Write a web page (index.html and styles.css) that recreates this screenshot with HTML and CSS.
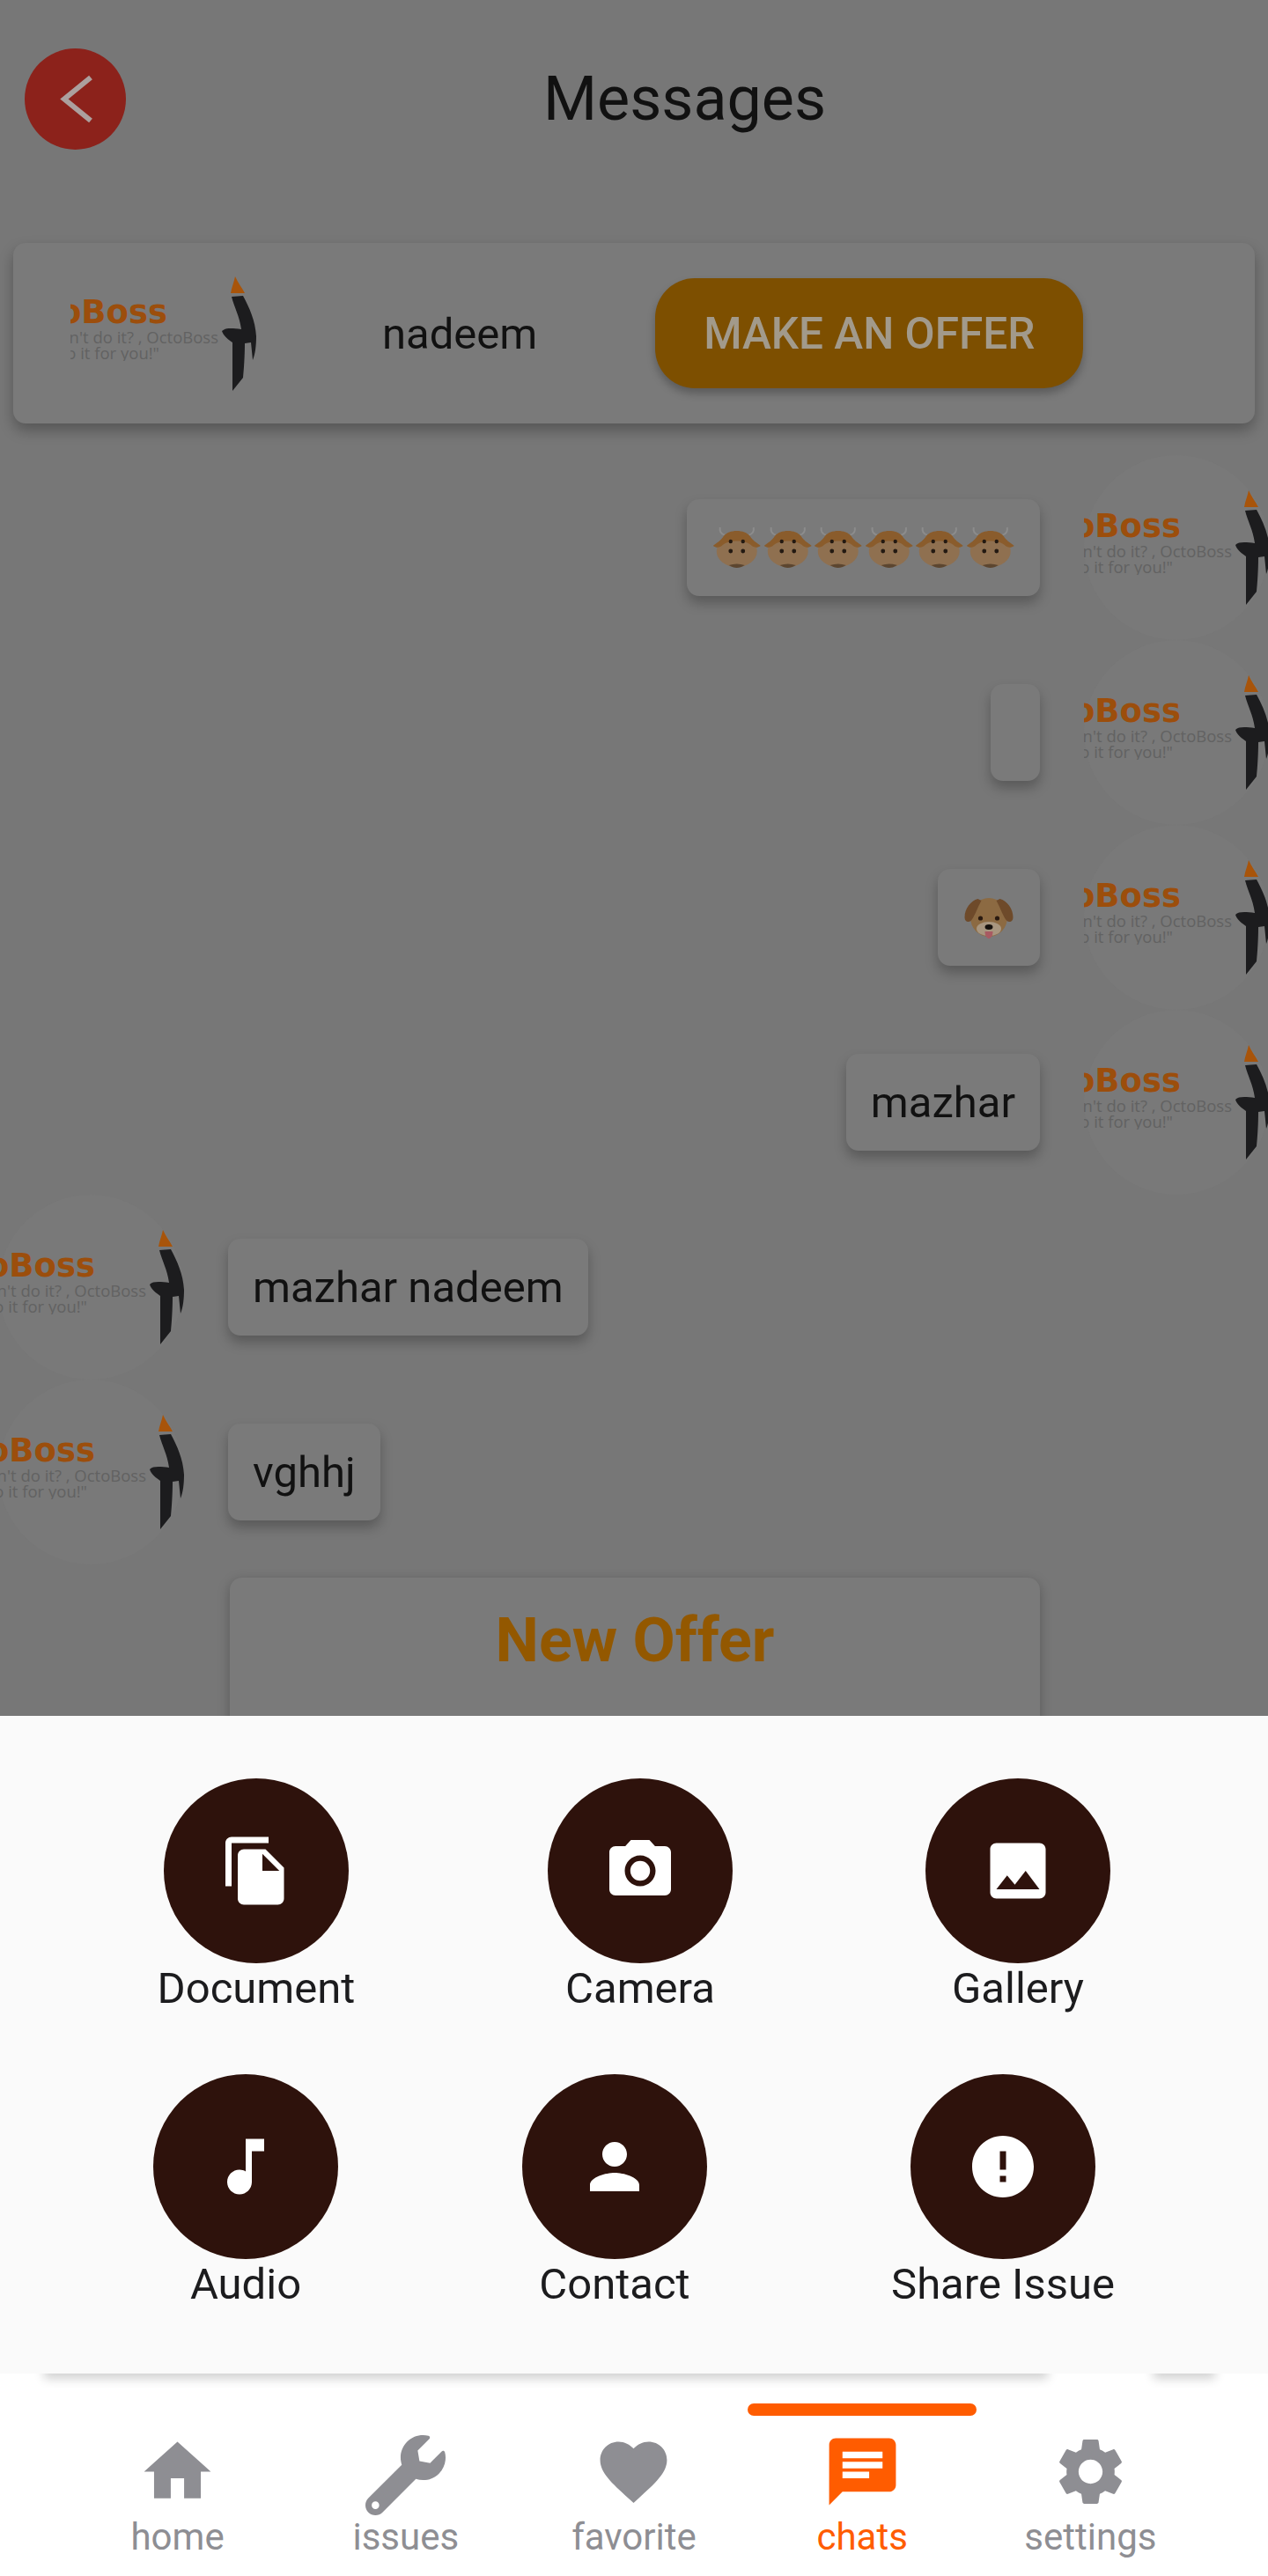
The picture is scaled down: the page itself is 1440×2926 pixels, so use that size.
FILE: index.html
```html
<!DOCTYPE html>
<html lang="en">
<head>
<title>Messages</title>
<meta charset="utf-8">
<link rel="stylesheet" href="styles.css">
</head>
<body>
<svg class="defs">
  <symbol id="rocket" viewBox="0 0 40 130">
    <path fill="#a8540a" d="M15 0C18 7 23 13 26 19L10 19C11 12 14 6 15 0Z"/>
    <path fill="#1c1c1e" d="M11 23L24 22C31 35 38 50 39 68C39 78 38 88 35 95L33 75L26 76C26 90 25 105 24 115L12 130L12 75C8 72 2 68 0 62C4 58 12 59 22 60C20 45 14 35 11 23Z"/>
  </symbol>
  <symbol id="cow" viewBox="0 0 54 48">
    <path fill="none" stroke="#8c8c8c" stroke-width="2" d="M8 1C7 6 10 9 14 10M46 1C47 6 44 9 40 10"/>
    <ellipse cx="27" cy="28" rx="23" ry="18" fill="#8f7050"/>
    <path fill="#8a5c2c" d="M0 22C5 18 9 16 12 11C18 3 36 3 42 11C45 16 49 18 54 22C50 25 46 24 43 21C36 15 18 15 11 21C8 24 4 25 0 22Z"/>
    <path fill="#5c4630" d="M18 44C24 48 30 48 36 44C30 42 24 42 18 44Z"/>
    <circle cx="20" cy="17" r="2.200" fill="#241a12"/>
    <circle cx="34" cy="17" r="2.200" fill="#241a12"/>
    <circle cx="20" cy="28" r="2.400" fill="#241a12"/>
    <circle cx="34" cy="28" r="2.400" fill="#241a12"/>
  </symbol>
  <symbol id="dog" viewBox="0 0 57 48">
    <ellipse cx="28.500" cy="24" rx="21" ry="22" fill="#8c6a42"/>
    <path fill="#6e4a2a" d="M16 3C8 5 1 14 1 24C1 29 5 30 8 28C12 24 15 14 20 5Z"/>
    <path fill="#6e4a2a" d="M41 3C49 5 56 14 56 24C56 29 52 30 49 28C45 24 42 14 37 5Z"/>
    <ellipse cx="28.500" cy="37" rx="14" ry="8" fill="#a8967f"/>
    <circle cx="19" cy="25" r="2.600" fill="#2a1a10"/>
    <circle cx="38" cy="25" r="2.600" fill="#2a1a10"/>
    <ellipse cx="28.500" cy="35" rx="4.500" ry="3" fill="#15100c"/>
    <path fill="#a85a62" d="M24 40L33 40C33 46 30 48 28.500 48C27 48 24 46 24 40Z"/>
  </symbol>
</svg>

<div class="chat">
  <header class="header">
    <div class="back">
      <svg viewBox="0 0 115 115"><path d="M75 33L45 57.500L75 82"/></svg>
    </div>
    <h1 class="title">Messages</h1>
  </header>

  <section class="peer-card">
    <div class="logo">
      <div class="logo-text">
        <span class="logo-name">OctoBoss</span>
        <span class="logo-line">Can't do it? , OctoBoss</span>
        <span class="logo-line short">will do it for you!"</span>
      </div>
      <svg class="rocket"><use href="#rocket"/></svg>
    </div>
    <span class="peer-name">nadeem</span>
    <button class="offer-btn">MAKE AN OFFER</button>
  </section>

  <div class="messages">
    <div class="row mine">
      <div class="bubble">
        <svg class="emoji"><use href="#cow"/></svg>
        <svg class="emoji"><use href="#cow"/></svg>
        <svg class="emoji"><use href="#cow"/></svg>
        <svg class="emoji"><use href="#cow"/></svg>
        <svg class="emoji"><use href="#cow"/></svg>
        <svg class="emoji"><use href="#cow"/></svg>
      </div>
      <div class="avatar">
        <div class="logo">
          <div class="logo-text"><span class="logo-name">OctoBoss</span><span class="logo-line">Can't do it? , OctoBoss</span><span class="logo-line short">will do it for you!"</span></div>
          <svg class="rocket"><use href="#rocket"/></svg>
        </div>
      </div>
    </div>
    <div class="row mine">
      <div class="bubble empty"></div>
      <div class="avatar">
        <div class="logo">
          <div class="logo-text"><span class="logo-name">OctoBoss</span><span class="logo-line">Can't do it? , OctoBoss</span><span class="logo-line short">will do it for you!"</span></div>
          <svg class="rocket"><use href="#rocket"/></svg>
        </div>
      </div>
    </div>
    <div class="row mine">
      <div class="bubble">
        <svg class="emoji dog"><use href="#dog"/></svg>
      </div>
      <div class="avatar">
        <div class="logo">
          <div class="logo-text"><span class="logo-name">OctoBoss</span><span class="logo-line">Can't do it? , OctoBoss</span><span class="logo-line short">will do it for you!"</span></div>
          <svg class="rocket"><use href="#rocket"/></svg>
        </div>
      </div>
    </div>
    <div class="row mine">
      <div class="bubble">mazhar</div>
      <div class="avatar">
        <div class="logo">
          <div class="logo-text"><span class="logo-name">OctoBoss</span><span class="logo-line">Can't do it? , OctoBoss</span><span class="logo-line short">will do it for you!"</span></div>
          <svg class="rocket"><use href="#rocket"/></svg>
        </div>
      </div>
    </div>
    <div class="row theirs">
      <div class="avatar">
        <div class="logo">
          <div class="logo-text"><span class="logo-name">OctoBoss</span><span class="logo-line">Can't do it? , OctoBoss</span><span class="logo-line short">will do it for you!"</span></div>
          <svg class="rocket"><use href="#rocket"/></svg>
        </div>
      </div>
      <div class="bubble">mazhar nadeem</div>
    </div>
    <div class="row theirs">
      <div class="avatar">
        <div class="logo">
          <div class="logo-text"><span class="logo-name">OctoBoss</span><span class="logo-line">Can't do it? , OctoBoss</span><span class="logo-line short">will do it for you!"</span></div>
          <svg class="rocket"><use href="#rocket"/></svg>
        </div>
      </div>
      <div class="bubble">vghhj</div>
    </div>
  </div>

  <div class="offer-card">New Offer</div>
</div>

<section class="sheet">
  <div class="sheet-row first">
    <div class="attach wide">
      <div class="attach-circle"><svg viewBox="0 0 24 24"><path d="M16 1H4c-1.100 0-2 .9-2 2v14h2V3h12V1zm-1 4l6 6v10c0 1.100-.9 2-2 2H7.990C6.890 23 6 22.100 6 21l.01-14c0-1.100.89-2 1.990-2h7zm-1 7h5.500L14 6.500V12z"/></svg></div>
      <span class="attach-label">Document</span>
    </div>
    <div class="attach">
      <div class="attach-circle"><svg viewBox="0 0 24 24"><path d="M12 15.200a3.200 3.200 0 1 0 0-6.400 3.200 3.200 0 0 0 0 6.400z"/><path d="M9 2L7.170 4H4c-1.100 0-2 .9-2 2v12c0 1.100.9 2 2 2h16c1.100 0 2-.9 2-2V6c0-1.100-.9-2-2-2h-3.170L15 2H9zm3 15c-2.760 0-5-2.240-5-5s2.240-5 5-5 5 2.240 5 5-2.240 5-5 5z"/></svg></div>
      <span class="attach-label">Camera</span>
    </div>
    <div class="attach">
      <div class="attach-circle"><svg viewBox="0 0 24 24"><path d="M21 19V5c0-1.100-.9-2-2-2H5c-1.100 0-2 .9-2 2v14c0 1.100.9 2 2 2h14c1.100 0 2-.9 2-2zM8.500 13.500l2.500 3.010L14.500 12l4.500 6H5l3.500-4.500z"/></svg></div>
      <span class="attach-label">Gallery</span>
    </div>
  </div>
  <div class="sheet-row second">
    <div class="attach">
      <div class="attach-circle"><svg viewBox="0 0 24 24"><path d="M12 3v10.550c-.59-.34-1.270-.55-2-.55-2.210 0-4 1.790-4 4s1.790 4 4 4 4-1.790 4-4V7h4V3h-6z"/></svg></div>
      <span class="attach-label">Audio</span>
    </div>
    <div class="attach">
      <div class="attach-circle"><svg viewBox="0 0 24 24"><path d="M12 12c2.210 0 4-1.790 4-4s-1.790-4-4-4-4 1.790-4 4 1.790 4 4 4zm0 2c-2.670 0-8 1.340-8 4v2h16v-2c0-2.660-5.330-4-8-4z"/></svg></div>
      <span class="attach-label">Contact</span>
    </div>
    <div class="attach share">
      <div class="attach-circle"><svg viewBox="0 0 24 24"><path d="M12 2C6.480 2 2 6.480 2 12s4.480 10 10 10 10-4.480 10-10S17.520 2 12 2zm1 15h-2v-2h2v2zm0-4h-2V7h2v6z"/></svg></div>
      <span class="attach-label">Share Issue</span>
    </div>
  </div>
</section>

<nav class="nav">
  <span class="under-shadow long"></span>
  <span class="under-shadow tiny"></span>
  <a class="nav-item">
    <svg class="nav-icon" viewBox="0 0 24 24"><path d="M10 20v-6h4v6h5v-8h3L12 3 2 12h3v8z"/></svg>
    <span class="nav-label">home</span>
  </a>
  <a class="nav-item">
    <svg class="nav-icon wrench" viewBox="0 0 512 512"><path fill-rule="evenodd" d="M507.730 109.100c-2.240-9.030-13.540-12.090-20.120-5.510l-74.360 74.360-67.880-11.310-11.310-67.880 74.360-74.360c6.620-6.620 3.430-17.900-5.660-20.160-47.380-11.740-99.550.91-136.580 37.930-39.640 39.640-50.550 97.100-34.050 147.200L18.740 402.760c-24.990 24.990-24.990 65.510 0 90.500 24.990 24.990 65.510 24.990 90.500 0l213.210-213.210c50.120 16.710 107.470 5.680 147.370-34.220 37.070-37.070 49.700-89.320 37.910-136.730zM64 472c-13.250 0-24-10.750-24-24 0-13.260 10.750-24 24-24s24 10.740 24 24c0 13.250-10.750 24-24 24z"/></svg>
    <span class="nav-label">issues</span>
  </a>
  <a class="nav-item">
    <svg class="nav-icon" viewBox="0 0 24 24"><path d="M12 21.350l-1.450-1.320C5.400 15.360 2 12.280 2 8.500 2 5.420 4.420 3 7.500 3c1.740 0 3.410.81 4.500 2.090C13.090 3.810 14.760 3 16.500 3 19.580 3 22 5.420 22 8.500c0 3.780-3.400 6.860-8.550 11.540L12 21.350z"/></svg>
    <span class="nav-label">favorite</span>
  </a>
  <a class="nav-item active">
    <span class="indicator"></span>
    <svg class="nav-icon" viewBox="0 0 24 24"><path d="M20 2H4c-1.100 0-1.990.9-1.990 2L2 22l4-4h14c1.100 0 2-.9 2-2V4c0-1.100-.9-2-2-2zM6 9h12v2H6V9zm8 5H6v-2h8v2zm4-6H6V6h12v2z"/></svg>
    <span class="nav-label">chats</span>
  </a>
  <a class="nav-item">
    <svg class="nav-icon" viewBox="0 0 24 24"><path d="M19.140 12.940c.04-.3.06-.61.06-.94 0-.32-.02-.64-.07-.94l2.030-1.580c.18-.14.23-.41.12-.61l-1.920-3.320c-.12-.22-.37-.29-.59-.22l-2.390.96c-.5-.38-1.030-.7-1.620-.94l-.36-2.540c-.04-.24-.24-.41-.48-.41h-3.840c-.24 0-.43.17-.47.41l-.36 2.540c-.59.24-1.130.57-1.620.94l-2.390-.96c-.22-.08-.47 0-.59.22L2.740 8.870c-.12.21-.08.47.12.61l2.030 1.580c-.05.3-.09.63-.09.94s.02.64.07.94l-2.030 1.580c-.18.14-.23.41-.12.61l1.920 3.320c.12.22.37.29.59.22l2.390-.96c.5.38 1.030.7 1.620.94l.36 2.540c.05.24.24.41.48.41h3.840c.24 0 .44-.17.47-.41l.36-2.540c.59-.24 1.130-.56 1.620-.94l2.390.96c.22.08.47 0 .59-.22l1.920-3.320c.12-.22.07-.47-.12-.61l-2.010-1.580zM12 15.600c-1.980 0-3.600-1.620-3.600-3.600s1.620-3.600 3.600-3.600 3.600 1.620 3.600 3.600-1.620 3.600-3.600 3.600z"/></svg>
    <span class="nav-label">settings</span>
  </a>
</nav>
</body>
</html>
```

FILE: styles.css
```css
body {
margin: 0;
width: 1440px;
height: 2926px;
overflow: hidden;
font-family: Roboto, sans-serif;
background-color: #ffffff;
}
.defs {
display: none;
}

/* dimmed chat behind the sheet */
.chat {
height: 1949px;
overflow: hidden;
background-color: #777777;
color: #111111;
}
.header {
display: flex;
align-items: center;
height: 224px;
padding: 0 28px;
}
.back {
width: 115px;
height: 115px;
flex: none;
border-radius: 50%;
background-color: #8c221b;
}
.back svg {
display: block;
width: 115px;
height: 115px;
}
.back path {
fill: none;
stroke: #aca09e;
stroke-width: 6;
}
.title {
flex: 1;
margin: 0;
text-align: center;
font-size: 70px;
font-weight: 400;
}

.peer-card {
display: flex;
align-items: center;
height: 205px;
margin: 52px 15px 0;
padding-left: 65px;
border-radius: 14px;
background-color: #7a7a7a;
box-shadow: 0 8px 16px rgba(0, 0, 0, 0.28);
}
.peer-name {
margin-left: 141px;
padding-top: 2px;
font-size: 49px;
}
.offer-btn {
width: 486px;
height: 125px;
margin-left: 134px;
border: none;
border-radius: 45px;
background-color: #7d4f00;
color: #a29a8b;
font-family: Roboto, sans-serif;
font-size: 49.5px;
font-weight: 500;
box-shadow: 0 6px 10px rgba(0, 0, 0, 0.25);
}

/* clipped company logo */
.logo {
display: flex;
align-items: center;
flex: none;
width: 213px;
height: 130px;
}
.logo-text {
display: flex;
flex-direction: column;
align-items: flex-end;
width: 172px;
margin-top: -12px;
overflow: hidden;
white-space: nowrap;
font-family: "DejaVu Sans", sans-serif;
}
.logo-name {
margin-right: 62px;
color: #9c4e0c;
font-size: 37px;
font-weight: 700;
line-height: 38px;
}
.logo-line {
margin-right: 4px;
color: #626262;
font-family: "Open Sans", sans-serif;
font-size: 18.5px;
line-height: 18px;
}
.logo-line.short {
margin-right: 71px;
}
.rocket {
flex: none;
width: 40px;
height: 130px;
}

.messages {
margin-top: 36px;
}
.row {
display: flex;
align-items: center;
height: 210px;
}
.row.mine {
justify-content: flex-end;
margin-right: -1px;
}
.row.theirs {
margin-left: -2px;
}
.avatar {
display: flex;
align-items: center;
flex: none;
width: 210px;
height: 210px;
border-radius: 50%;
background-color: #797979;
overflow: visible;
}
.mine .avatar {
margin-left: 50px;
}
.theirs .avatar {
margin-right: 51px;
}
.bubble {
display: flex;
align-items: center;
box-sizing: border-box;
height: 110px;
padding: 0 28px;
border-radius: 14px;
background-color: #7a7a7a;
font-size: 49px;
box-shadow: 0 8px 14px rgba(0, 0, 0, 0.25);
}
.bubble.empty {
width: 56px;
}
.emoji {
width: 57.5px;
height: 48px;
}
.emoji.dog {
width: 60px;
}

.offer-card {
box-sizing: border-box;
width: 920px;
height: 300px;
margin: 15px 0 0 261px;
padding-top: 30px;
border-radius: 14px;
background-color: #7a7a7a;
color: #935800;
text-align: center;
font-size: 70px;
font-weight: 700;
box-shadow: 0 4px 14px rgba(0, 0, 0, 0.25);
}

/* attachment sheet */
.sheet {
box-sizing: border-box;
height: 747px;
padding-top: 71px;
background-color: #fafafa;
}
.sheet-row {
display: flex;
justify-content: center;
}
.sheet-row.first {
gap: 219px;
margin-bottom: 66px;
}
.sheet-row.second {
gap: 209px;
}
.attach {
display: flex;
flex-direction: column;
align-items: center;
width: 210px;
}
.attach.wide {
width: 224px;
}
.attach.share {
width: 254px;
}
.attach-circle {
display: flex;
align-items: center;
justify-content: center;
width: 210px;
height: 210px;
border-radius: 50%;
background-color: #2e120c;
}
.attach-circle svg {
width: 84px;
height: 84px;
fill: #ffffff;
}
.attach-label {
height: 60px;
line-height: 58px;
font-size: 49px;
white-space: nowrap;
color: #1c1c1e;
}

/* bottom navigation */
.nav {
position: relative;
display: grid;
grid-template-columns: repeat(5, 1fr);
box-sizing: border-box;
height: 230px;
padding: 66px 72px 0;
overflow: hidden;
background-color: #ffffff;
}
.under-shadow {
position: absolute;
top: -30px;
height: 30px;
box-shadow: 0 6px 12px rgba(0, 0, 0, 0.18);
}
.under-shadow.long {
left: 50px;
width: 1140px;
}
.under-shadow.tiny {
left: 1310px;
width: 70px;
}
.nav-item {
position: relative;
display: flex;
flex-direction: column;
align-items: center;
color: #8e8e93;
font-size: 42px;
line-height: 52px;
}
.nav-icon {
width: 91px;
height: 91px;
fill: #8e8e93;
}
.nav-icon.wrench {
margin: 4px 0 -4px;
}
.nav-label {
padding-top: 3px;
}
.nav-item.active {
color: #ff5c00;
}
.nav-item.active .nav-icon {
fill: #ff5c00;
}
.indicator {
position: absolute;
top: -32px;
left: -1px;
width: 260px;
height: 14px;
border-radius: 7px;
background-color: #ff5c00;
}
```
